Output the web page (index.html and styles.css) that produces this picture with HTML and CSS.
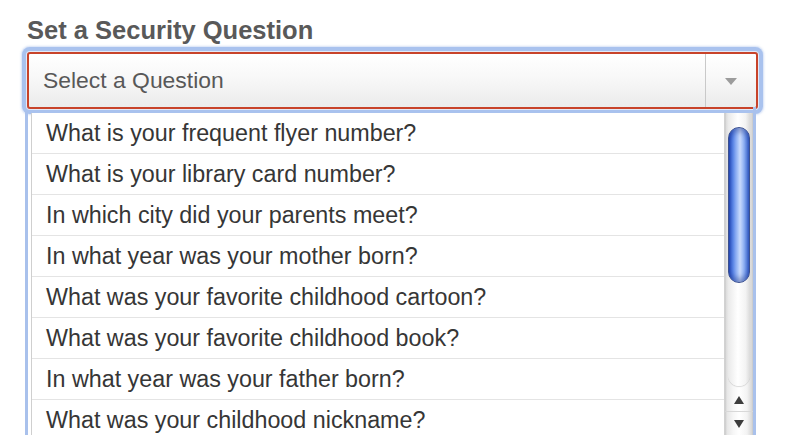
FILE: index.html
```html
<!DOCTYPE html>
<html>
<head>
<meta charset="utf-8">
<link rel="stylesheet" href="styles.css">
</head>
<body>
<div class="page">
  <h1 class="title">Set a Security Question</h1>
  <div class="field">
    <div class="select">
      <span class="select-label">Select a Question</span>
      <span class="select-btn"><span class="caret"></span></span>
    </div>
    <div class="menu">
      <ul class="options">
        <li class="option">What is your frequent flyer number?</li>
        <li class="option">What is your library card number?</li>
        <li class="option">In which city did your parents meet?</li>
        <li class="option">In what year was your mother born?</li>
        <li class="option">What was your favorite childhood cartoon?</li>
        <li class="option">What was your favorite childhood book?</li>
        <li class="option">In what year was your father born?</li>
        <li class="option">What was your childhood nickname?</li>
      </ul>
      <div class="scrollbar">
        <div class="track">
          <div class="thumb"></div>
        </div>
        <div class="arrow arrow-up"><span class="tri-up"></span></div>
        <div class="arrow arrow-down"><span class="tri-down"></span></div>
      </div>
    </div>
  </div>
</div>
</body>
</html>
```

FILE: styles.css
```css
html, body {
  margin: 0;
  padding: 0;
  background: #ffffff;
  overflow: hidden;
}

.page {
  width: 800px;
  height: 435px;
  overflow: hidden;
  font-family: "Liberation Sans", Arial, Helvetica, sans-serif;
}

.title {
  margin: 15px 0 0 27px;
  font-size: 25.5px;
  line-height: 30px;
  font-weight: bold;
  color: #595959;
}

.field {
  position: relative;
  margin: 7px 0 0 27px;
  width: 731px;
}

.select {
  box-sizing: border-box;
  height: 57px;
  display: flex;
  align-items: stretch;
  border: 2px solid #c8432a;
  border-radius: 3px;
  background: linear-gradient(to bottom, #ffffff 0%, #f8f8f8 45%, #ebebeb 100%);
  box-shadow: 0 0 0 1px #e3e9f6, 0 0 0 5px #a9c2ee, 0 0 2px 6px rgba(169, 194, 238, 0.5);
}

.select-label {
  flex: 1;
  display: flex;
  align-items: center;
  padding-left: 14px;
  font-size: 22.9px;
  color: #585858;
}

.select-btn {
  width: 50px;
  border-left: 1px solid #c9c9c9;
  display: flex;
  align-items: center;
  justify-content: center;
}

.caret {
  width: 0;
  height: 0;
  border-left: 6px solid transparent;
  border-right: 6px solid transparent;
  border-top: 7px solid #9c9c9c;
  margin-top: 2px;
}

.menu {
  position: absolute;
  top: 61px;
  left: 4px;
  width: 722px;
  height: 322px;
  display: flex;
  background: #ffffff;
}

.menu::before {
  content: "";
  position: absolute;
  left: -6px;
  top: -2px;
  bottom: 0;
  width: 3px;
  background: #a9c1ec;
}

.menu::after {
  content: "";
  position: absolute;
  right: -3px;
  top: -6px;
  bottom: 0;
  width: 3px;
  background: #a9c1ec;
}

.options {
  list-style: none;
  margin: 0;
  padding: 0;
  flex: 1;
  border-left: 1px solid #cfcfcf;
}

.option {
  box-sizing: border-box;
  height: 41px;
  line-height: 41px;
  padding-left: 14px;
  border-bottom: 1px solid #e4e4e4;
  font-size: 23.3px;
  color: #363636;
  white-space: nowrap;
}

.scrollbar {
  width: 28px;
  display: flex;
  flex-direction: column;
  background: linear-gradient(to right, #c9c9c9 0, #e6e6e6 2px, #f6f6f6 8px, #ffffff 14px, #f3f3f3 22px, #d6d6d6 27px, #c4c4c4 28px);
  border-left: 1px solid #d2d2d2;
}

.track {
  flex: 1;
  padding-top: 14px;
  box-sizing: border-box;
  display: flex;
  justify-content: center;
  border-radius: 0 0 11px 11px;
  background: linear-gradient(to right, #e9e9e9, #ffffff 45%, #f3f3f3 80%, #dadada);
  margin: 0 3px;
  box-shadow: 0 1px 1px rgba(0, 0, 0, 0.15);
}

.thumb {
  width: 22px;
  height: 156px;
  box-sizing: border-box;
  border-radius: 11px;
  border: 1px solid #3a4f8f;
  background: linear-gradient(to right, #2d58cf 0%, #5d88ea 20%, #a9c4f8 45%, #c9dafc 55%, #8fb1f4 75%, #3f6ddd 100%);
  box-shadow: inset 0 4px 5px rgba(20, 40, 120, 0.35), inset 0 -4px 5px rgba(20, 40, 120, 0.35);
}

.arrow {
  height: 23px;
  display: flex;
  align-items: center;
  justify-content: center;
}

.arrow-up {
  margin-top: 2px;
  border-bottom: 1px solid #d8d8d8;
}

.tri-up {
  width: 0;
  height: 0;
  border-left: 5px solid transparent;
  border-right: 5px solid transparent;
  border-bottom: 8px solid #3d3d3d;
}

.tri-down {
  width: 0;
  height: 0;
  border-left: 5px solid transparent;
  border-right: 5px solid transparent;
  border-top: 8px solid #3d3d3d;
}
```
